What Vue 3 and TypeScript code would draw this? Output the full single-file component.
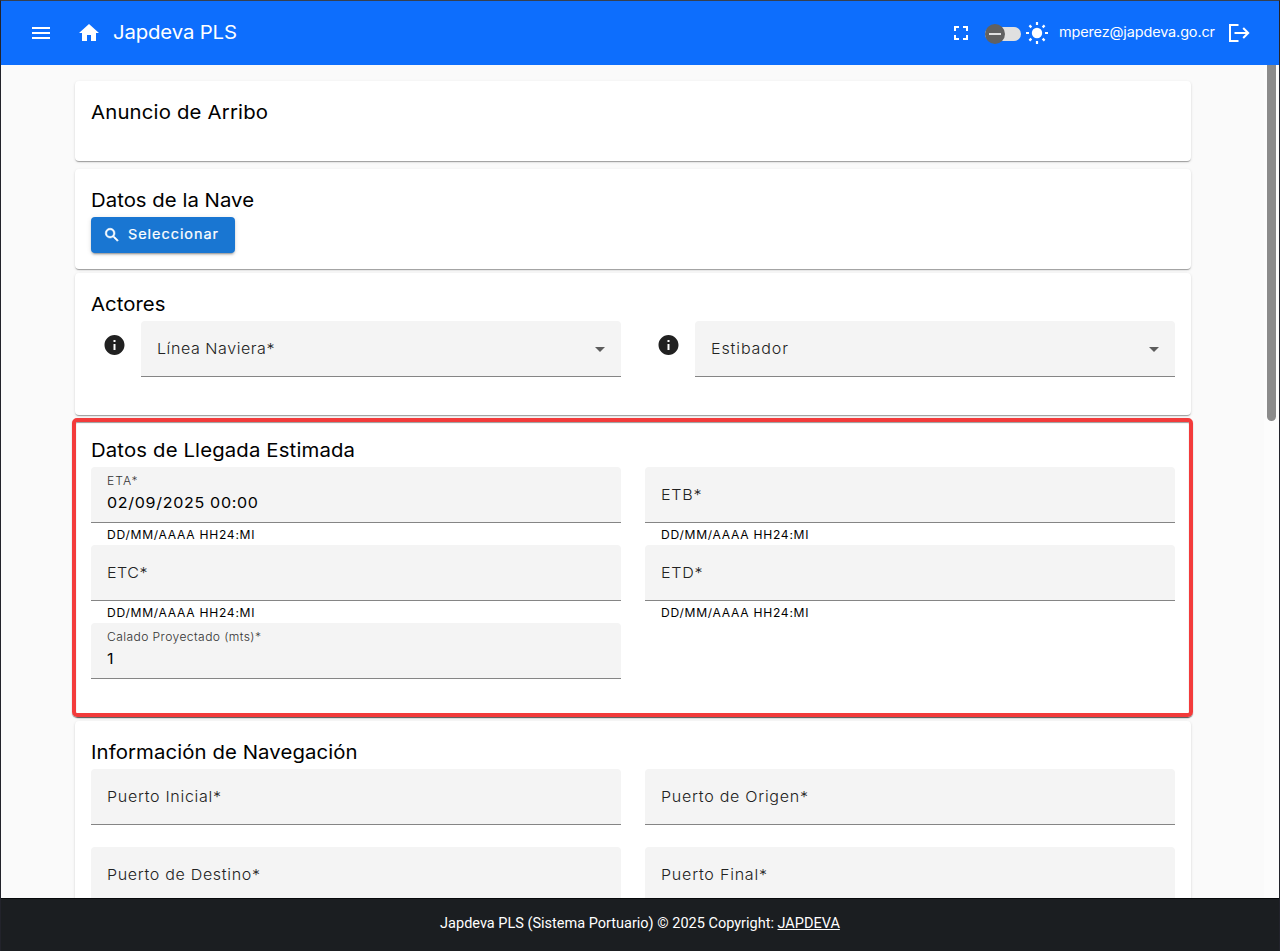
<script setup lang="ts">
interface Label {
  text: string
  width: number
}
interface Field {
  label: Label
  value?: Label
  hint?: Label
}

const hint: Label = { text: 'DD/MM/AAAA HH24:MI', width: 147.5 }

const actors: Field[] = [
  { label: { text: 'Línea Naviera*', width: 117.5 } },
  { label: { text: 'Estibador', width: 77 } },
]

const arrival: Field[] = [
  { label: { text: 'ETA*', width: 30.5 }, value: { text: '02/09/2025 00:00', width: 151 }, hint },
  { label: { text: 'ETB*', width: 40.5 }, hint },
  { label: { text: 'ETC*', width: 40.5 }, hint },
  { label: { text: 'ETD*', width: 41.5 }, hint },
  { label: { text: 'Calado Proyectado (mts)*', width: 154 }, value: { text: '1', width: 9 } },
]

const navigation: Field[] = [
  { label: { text: 'Puerto Inicial*', width: 114 } },
  { label: { text: 'Puerto de Origen*', width: 147 } },
  { label: { text: 'Puerto de Destino*', width: 153 } },
  { label: { text: 'Puerto Final*', width: 106 } },
]

// Widens the glyphs slightly, then tracks the line so that it spans the given width.
const STRETCH = 1.07
const vFit = {
  mounted(el: HTMLElement, binding: { value: number }) {
    const count = (el.textContent ?? '').length
    el.style.display = 'inline-block'
    if (count > 1) {
      const natural = el.getBoundingClientRect().width
      el.style.letterSpacing = `${(binding.value / STRETCH - natural) / (count - 1)}px`
    }
    el.style.transformOrigin = '0 50%'
    el.style.transform = `scaleX(${STRETCH})`
  },
}
</script>

<template>
  <div class="app">
    <header class="bar">
      <svg class="icon menu" viewBox="0 0 24 24"><path d="M3 18h18v-2H3v2zm0-5h18v-2H3v2zm0-7v2h18V6H3z" /></svg>
      <svg class="icon home" viewBox="0 0 24 24"><path d="M10 20v-6h4v6h5v-8h3L12 3 2 12h3v8z" /></svg>
      <div class="brand"><span v-fit="124">Japdeva PLS</span></div>
      <svg class="icon full" viewBox="0 0 24 24"><path d="M7 14H5v5h5v-2H7v-3zm-2-4h2V7h3V5H5v5zm12 7h-3v2h5v-5h-2v3zM14 5v2h3v3h2V5h-5z" /></svg>
      <div class="switch"><div class="knob"><i></i></div></div>
      <svg class="icon sun" viewBox="0 0 24 24">
        <circle cx="12" cy="12" r="5.200" />
        <path class="rays" d="M12 1v3M12 20v3M1 12h3M20 12h3M4.400 4.400l2 2M17.600 17.600l2 2M4.400 19.600l2-2M17.600 6.400l2-2" />
      </svg>
      <div class="user"><span v-fit="156">mperez@japdeva.go.cr</span></div>
      <svg class="exit" viewBox="0 0 22 20">
        <path d="M10.500 2H2v16h8.500M6.500 10H20M15.200 5l5 5-5 5" />
      </svg>
    </header>

    <div class="viewport">
      <main class="content">
        <section class="card intro">
          <h2><span v-fit="177">Anuncio de Arribo</span></h2>
        </section>

        <section class="card">
          <h2><span v-fit="163">Datos de la Nave</span></h2>
          <button class="select" type="button">
            <svg class="icon" viewBox="0 0 24 24"><path d="M15.500 14h-.79l-.28-.27A6.471 6.471 0 0 0 16 9.500 6.500 6.500 0 1 0 9.500 16c1.610 0 3.090-.59 4.230-1.570l.27.28v.79l5 4.990L20.490 19l-4.990-5zm-6 0C7.010 14 5 11.990 5 9.500S7.010 5 9.500 5 14 7.010 14 9.500 11.990 14 9.500 14z" /></svg>
            <span v-fit="90">Seleccionar</span>
          </button>
        </section>

        <section class="card">
          <h2><span v-fit="74.5">Actores</span></h2>
          <div class="grid">
            <div v-for="f in actors" :key="f.label.text" class="actor">
              <svg class="icon info" viewBox="-0.500 0 24 24"><path d="M12 2C6.480 2 2 6.480 2 12s4.480 10 10 10 10-4.480 10-10S17.520 2 12 2zm1 15h-2v-6h2v6zm0-8h-2V7h2v2z" /></svg>
              <div class="cell">
                <div class="field">
                  <div class="label"><span v-fit="f.label.width">{{ f.label.text }}</span></div>
                  <i class="caret"></i>
                </div>
              </div>
            </div>
          </div>
        </section>

        <section class="card marked">
          <h2><span v-fit="264">Datos de Llegada Estimada</span></h2>
          <div class="grid">
            <div v-for="f in arrival" :key="f.label.text" class="cell">
              <div class="field" :class="{ filled: f.value }">
                <div class="label"><span v-fit="f.label.width">{{ f.label.text }}</span></div>
                <div v-if="f.value" class="value"><span v-fit="f.value.width">{{ f.value.text }}</span></div>
              </div>
              <div v-if="f.hint" class="hint"><span v-fit="f.hint.width">{{ f.hint.text }}</span></div>
            </div>
          </div>
        </section>

        <section class="card">
          <h2><span v-fit="266.5">Información de Navegación</span></h2>
          <div class="grid">
            <div v-for="f in navigation" :key="f.label.text" class="cell">
              <div class="field">
                <div class="label"><span v-fit="f.label.width">{{ f.label.text }}</span></div>
              </div>
            </div>
          </div>
        </section>
      </main>
      <div class="track"><div class="thumb"></div></div>
    </div>

    <footer class="foot">
      <span>Japdeva PLS (Sistema Portuario) © 2025 Copyright: <a>JAPDEVA</a></span>
    </footer>
  </div>
</template>

<style>
body {
  margin: 0;
  overflow: hidden;
}
</style>

<style scoped>
.app {
  box-sizing: border-box;
  width: 1280px;
  height: 951px;
  display: flex;
  flex-direction: column;
  border: solid #22232b;
  border-width: 1px 1px 0;
  border-top-color: #36404f;
  background: #fafafa;
  color: #000;
  font-family: Inter, "Noto Sans", sans-serif;
  overflow: hidden;
}
span {
  white-space: pre;
}
.icon {
  width: 24px;
  height: 24px;
  flex: none;
  fill: currentColor;
}
.bar {
  flex: none;
  height: 64px;
  box-sizing: border-box;
  padding: 0 29px 0 28px;
  display: flex;
  align-items: center;
  background: #0d6efd;
  color: #fff;
}
.home {
  margin-left: 24px;
}
.brand {
  flex: 1;
  margin-left: 12px;
  font-size: 19px;
  line-height: 24px;
}
.full {
  margin-right: 12px;
}
.switch {
  width: 36px;
  height: 14px;
  margin-top: 2px;
  border-radius: 7px;
  background: #e0e0e0;
  display: flex;
  align-items: center;
}
.knob {
  width: 20px;
  height: 20px;
  flex: none;
  border-radius: 50%;
  background: #616161;
  display: flex;
  align-items: center;
  justify-content: center;
}
.knob i {
  width: 12px;
  height: 2px;
  background: #e0e0e0;
}
.sun {
  margin-left: 4px;
}
.rays {
  fill: none;
  stroke: currentColor;
  stroke-width: 2.2;
}
.user {
  width: 156px;
  margin-left: 10px;
  padding-bottom: 2px;
  font-size: 13.5px;
  line-height: 20px;
}
.exit {
  width: 22px;
  height: 20px;
  margin-left: 13px;
  fill: none;
  stroke: #fff;
  stroke-width: 2;
}
.viewport {
  flex: none;
  height: 833px;
  display: flex;
  overflow: hidden;
}
.content {
  width: 1116px;
  margin: 0 auto;
  padding-top: 16px;
}
.track {
  width: 15px;
  background: #fcfcfc;
}
.thumb {
  width: 9px;
  height: 356px;
  margin-left: 3px;
  border-radius: 0 0 5px 5px;
  background: #8b8b8b;
}
.card {
  position: relative;
  box-sizing: border-box;
  margin-bottom: 4px;
  padding: 16px;
  border-radius: 4px;
  background: #fff;
  box-shadow: 0 2px 1px -1px rgba(0, 0, 0, 0.2), 0 1px 1px rgba(0, 0, 0, 0.14), 0 1px 3px rgba(0, 0, 0, 0.12);
}
.intro {
  height: 80px;
  margin-bottom: 8px;
}
.marked::after {
  content: "";
  position: absolute;
  inset: -1px -2px 0 -3px;
  border: 4px solid #f33b3b;
  border-radius: 5px;
  box-shadow: 0 1px 1px rgba(0, 0, 0, 0.45), inset 0 1px 1px rgba(0, 0, 0, 0.4);
}
h2 {
  margin: 0;
  font-size: 19px;
  font-weight: 400;
  line-height: 31px;
  height: 32px;
}
.select {
  width: 144px;
  height: 36px;
  display: flex;
  align-items: center;
  padding: 0 0 1px 12px;
  border: 0;
  border-radius: 4px;
  background: #1976d2;
  color: #fff;
  font: 400 13.5px Inter, sans-serif;
  -webkit-text-stroke: 0.2px #fff;
  box-shadow: 0 3px 1px -2px rgba(0, 0, 0, 0.2), 0 2px 2px rgba(0, 0, 0, 0.14), 0 1px 5px rgba(0, 0, 0, 0.12);
}
.select .icon {
  width: 18px;
  height: 18px;
  margin-right: 7px;
  stroke: #fff;
  stroke-width: 0.7;
}
.select span {
  padding-bottom: 1px;
}
.grid {
  display: grid;
  grid-template-columns: 1fr 1fr;
  column-gap: 24px;
}
.actor {
  display: grid;
  grid-template-columns: 50px 1fr;
}
.info {
  margin: 12px 0 0 11px;
  color: #212121;
}
.cell {
  height: 78px;
}
.field {
  box-sizing: border-box;
  height: 56px;
  padding: 0 16px;
  display: flex;
  align-items: center;
  justify-content: space-between;
  border-bottom: 1px solid #858585;
  border-radius: 4px 4px 0 0;
  background: #f4f4f4;
}
.label {
  font-size: 15px;
  font-weight: 300;
  line-height: 24px;
  color: #222;
}
.filled {
  display: block;
  padding-top: 6px;
}
.filled .label {
  font-size: 11.3px;
  line-height: 16px;
  color: #333;
}
.value {
  font-size: 15px;
  line-height: 28px;
}
.caret {
  margin-top: 1px;
  border: 5px solid transparent;
  border-top-color: #5c5c5c;
  border-bottom: 0;
}
.hint {
  padding-left: 16px;
  font-size: 11.3px;
  line-height: 22px;
  padding-top: 1px;
}
.foot {
  flex: 1;
  display: flex;
  align-items: center;
  justify-content: center;
  padding-bottom: 3px;
  border-top: 1px solid #07090b;
  background: #1b1e21;
  color: #fff;
  font: 14.5px Roboto, sans-serif;
}
.foot a {
  text-decoration: underline;
}
</style>
